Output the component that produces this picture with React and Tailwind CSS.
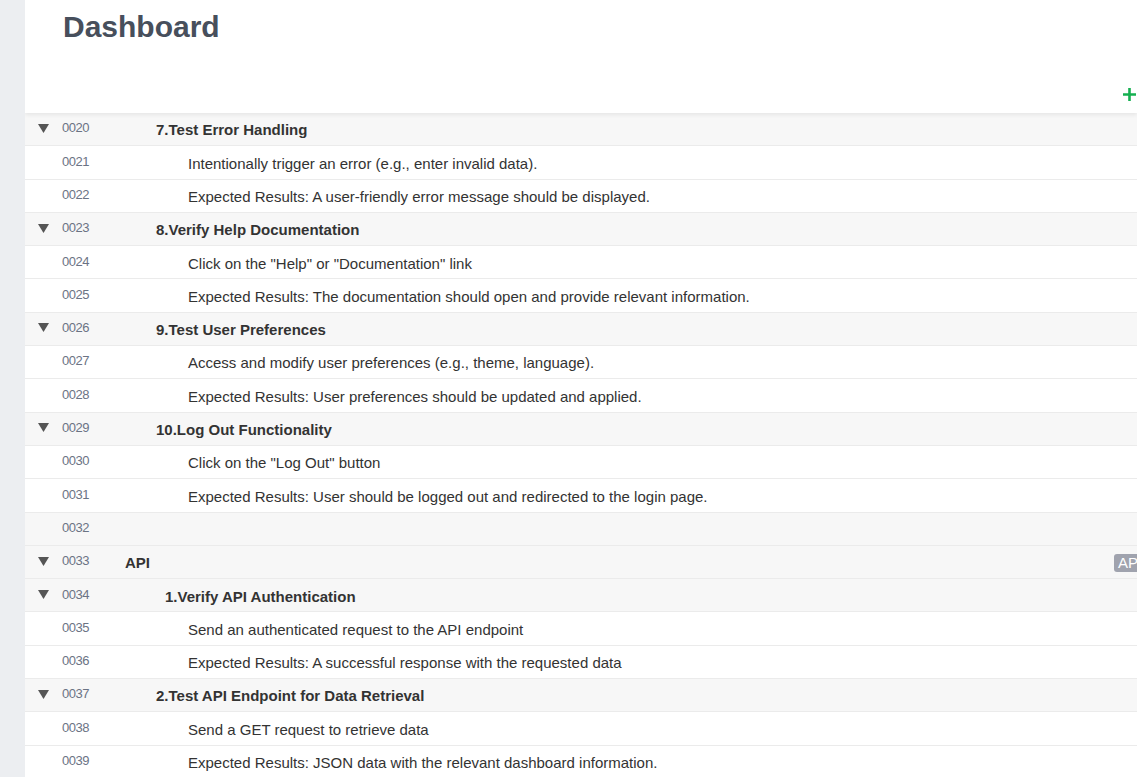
import React from "react";

const rows = [
  { n: "0020", t: "7.Test Error Handling", k: "h" },
  { n: "0021", t: "Intentionally trigger an error (e.g., enter invalid data).", k: "c" },
  { n: "0022", t: "Expected Results: A user-friendly error message should be displayed.", k: "c" },
  { n: "0023", t: "8.Verify Help Documentation", k: "h" },
  { n: "0024", t: 'Click on the "Help" or "Documentation" link', k: "c" },
  { n: "0025", t: "Expected Results: The documentation should open and provide relevant information.", k: "c" },
  { n: "0026", t: "9.Test User Preferences", k: "h" },
  { n: "0027", t: "Access and modify user preferences (e.g., theme, language).", k: "c" },
  { n: "0028", t: "Expected Results: User preferences should be updated and applied.", k: "c" },
  { n: "0029", t: "10.Log Out Functionality", k: "h" },
  { n: "0030", t: 'Click on the "Log Out" button', k: "c" },
  { n: "0031", t: "Expected Results: User should be logged out and redirected to the login page.", k: "c" },
  { n: "0032", t: "", k: "e" },
  { n: "0033", t: "API", k: "s" },
  { n: "0034", t: "1.Verify API Authentication", k: "h2" },
  { n: "0035", t: "Send an authenticated request to the API endpoint", k: "c" },
  { n: "0036", t: "Expected Results: A successful response with the requested data", k: "c" },
  { n: "0037", t: "2.Test API Endpoint for Data Retrieval", k: "h" },
  { n: "0038", t: "Send a GET request to retrieve data", k: "c" },
  { n: "0039", t: "Expected Results: JSON data with the relevant dashboard information.", k: "c" },
];

function Tri() {
  return (
    <svg width="11" height="9" viewBox="0 0 11 9">
      <path d="M0 0 H11 L5.5 9 Z" fill="#555" />
    </svg>
  );
}

function Row({ r }) {
  const gray = r.k !== "c";
  const hasTri = r.k === "h" || r.k === "h2" || r.k === "s";
  return (
    <div
      className={`relative flex items-center h-[33.3px] border-b border-[#ebebeb] ${gray ? "bg-[#f7f7f7]" : "bg-white"}`}
    >
      <div className="w-[37px] flex justify-start pl-[13px] pb-[2px]">{hasTri && <Tri />}</div>
      <div
        className="w-[63px] text-[13px] tracking-[-0.5px] text-[#6b7384] pb-[2px]"
        style={{ fontFamily: '"Liberation Sans", Arial, sans-serif' }}
      >
        {r.n}
      </div>
      <div
        className={`pt-[3px] text-[15px] text-[#333] ${
          r.k === "c" ? "pl-[63px]" : r.k === "h" ? "pl-[31px] font-bold" : r.k === "h2" ? "pl-[40px] font-bold" : "font-bold"
        }`}
        style={{ fontFamily: '"Liberation Sans", Arial, sans-serif' }}
      >
        {r.t}
      </div>
      {r.k === "s" && (
        <div className="absolute left-[1089px] top-[8px] h-[18px] px-[4px] rounded-[3px] bg-[#a0a3ae] text-white text-[15px] leading-[18px]"
          style={{ fontFamily: '"Liberation Sans", Arial, sans-serif' }}>
          API
        </div>
      )}
    </div>
  );
}

export default function App() {
  return (
    <div className="w-[1137px] h-[777px] overflow-hidden flex bg-white">
      <div className="w-[25px] shrink-0 bg-[#eceef1]" />
      <div className="flex-1 flex flex-col overflow-hidden">
        <div className="relative h-[113px] shrink-0 bg-white z-10 shadow-[0_2px_4px_rgba(0,0,0,0.07)]">
          <h1
            className="absolute left-[38px] top-[4px] text-[30px] font-bold text-[#474f5c]"
            style={{ fontFamily: '"Liberation Sans", Arial, sans-serif' }}
          >
            Dashboard
          </h1>
          <svg className="absolute left-[1097px] top-[87px]" width="15" height="15" viewBox="0 0 15 15">
            <path d="M7.5 1 V14 M1 7.5 H14" stroke="#15b050" strokeWidth="2.6" />
          </svg>
        </div>
        <div className="flex flex-col">
          {rows.map((r) => (
            <Row key={r.n} r={r} />
          ))}
        </div>
      </div>
    </div>
  );
}
